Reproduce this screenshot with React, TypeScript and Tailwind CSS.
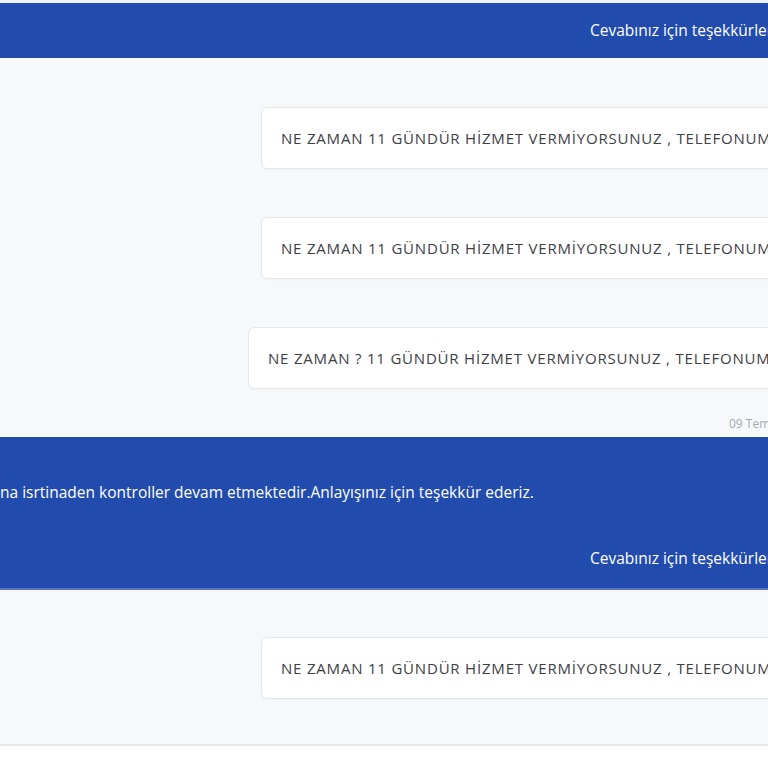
const cards = [
  { text: 'NE ZAMAN 11 GÜNDÜR HİZMET VERMİYORSUNUZ , TELEFONUMA DÖNÜŞ YAPILMADI', indent: 'ml-[261px]' },
  { text: 'NE ZAMAN 11 GÜNDÜR HİZMET VERMİYORSUNUZ , TELEFONUMA DÖNÜŞ YAPILMADI', indent: 'ml-[261px]' },
  { text: 'NE ZAMAN ? 11 GÜNDÜR HİZMET VERMİYORSUNUZ , TELEFONUMA DÖNÜŞ YAPILMADI', indent: 'ml-[248px]' },
];

function Bubble({ text, indent }: { text: string; indent: string }) {
  return (
    <div className={`${indent} h-[62px] w-[760px] shrink-0 rounded-md border border-[#e4e7ec] bg-white pl-[19px] flex items-center shadow-[0_1px_2px_rgba(0,0,0,0.03)]`}>
      <span className="whitespace-nowrap text-[15px] text-[#3d4046] tracking-[0.8px]">{text}</span>
    </div>
  );
}

export default function App() {
  return (
    <div className="w-[768px] h-[768px] overflow-hidden bg-white font-['Open_Sans',sans-serif]">
      <div className="h-[3px] bg-[#eef1f6]" />

      {/* top reply */}
      <div className="h-[55px] bg-[#224bae] flex items-center pl-[590px]">
        <span className="whitespace-nowrap text-[15.5px] text-white">Cevabınız için teşekkürler.</span>
      </div>

      {/* customer messages */}
      <div className="bg-[#f6f8fc] pt-[49px] h-[379px] flex flex-col">
        <div className="flex flex-col gap-[48px]">
          {cards.map((c, i) => (
            <Bubble key={i} text={c.text} indent={c.indent} />
          ))}
        </div>
        <div className="mt-[27px] pl-[729px] text-[12px] leading-[16px] text-[#a6abb3] whitespace-nowrap">09 Temmuz 2024</div>
      </div>

      {/* agent reply */}
      <div className="h-[153px] bg-[#224bae] border-b-2 border-[#5575c4] flex flex-col">
        <div className="mt-[45px] h-[22px] flex items-center relative">
          <span className="absolute right-full whitespace-nowrap text-[15.5px] text-white">Arıza kaydı</span>
          <span className="whitespace-nowrap text-[15.5px] text-white">na isrtinaden kontroller devam etmektedir.Anlayışınız için teşekkür ederiz.</span>
        </div>
        <div className="mt-[44px] h-[22px] flex items-center pl-[590px]">
          <span className="whitespace-nowrap text-[15.5px] text-white">Cevabınız için teşekkürler.</span>
        </div>
      </div>

      {/* next customer message */}
      <div className="bg-[#f6f8fc] h-[156px] pt-[47px] border-b-2 border-[#e6e9ee]">
        <Bubble text={cards[0].text} indent="ml-[261px]" />
      </div>
    </div>
  );
}
